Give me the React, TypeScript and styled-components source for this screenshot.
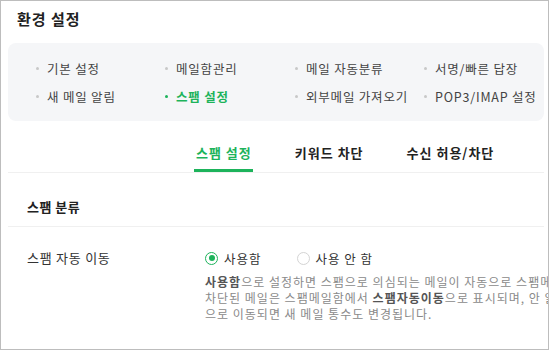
import React, { useState } from 'react'
import styled, { createGlobalStyle } from 'styled-components'

const GlobalStyle = createGlobalStyle`
  html, body {
    margin: 0;
    padding: 0;
    background: #fff;
  }
  body {
    font-family: "Noto Sans CJK KR", "Noto Sans", sans-serif;
    color: #333;
  }
`

const Frame = styled.div`
  width: 547px;
  height: 348px;
  border: 1px solid #bdbdbd;
  overflow: hidden;
  background: #fff;
`

const Page = styled.div`
  width: 536px;
  margin-left: 7px;
`

const Title = styled.h1`
  margin: 0;
  padding: 8px 0 0 9px;
  font-size: 15px;
  line-height: 20px;
  font-weight: 700;
  letter-spacing: 1px;
  color: #222;
`

const MenuPanel = styled.ul`
  list-style: none;
  margin: 14px 0 0;
  padding: 11px 0 11px 28px;
  display: grid;
  grid-template-columns: 129px 130px 129px 129px;
  grid-auto-rows: 28px;
  background: #f5f6f8;
  border-radius: 8px;
`

const MenuItem = styled.li<{ active?: boolean }>`
  display: flex;
  align-items: center;
  white-space: nowrap;
  font-size: 12.5px;
  letter-spacing: 0.8px;
  color: ${({ active }) => (active ? '#1db35b' : '#444')};
  font-weight: ${({ active }) => (active ? 700 : 400)};

  &::before {
    content: '';
    width: 3px;
    height: 3px;
    border-radius: 50%;
    margin-right: 8px;
    background: ${({ active }) => (active ? '#1db35b' : '#c8c8c8')};
  }
`

const TabBar = styled.div`
  display: flex;
  margin-top: 14px;
  height: 37px;
  padding-left: 186px;
  gap: 40px;
  border-bottom: 1px solid #f0f0f0;
`

const Tab = styled.div<{ active?: boolean }>`
  height: 34px;
  padding: 0 1px 0 2px;
  display: flex;
  align-items: center;
  font-size: 13px;
  font-weight: 700;
  letter-spacing: 1px;
  white-space: nowrap;
  color: ${({ active }) => (active ? '#1db35b' : '#222')};
  border-bottom: 3px solid ${({ active }) => (active ? '#1db35b' : 'transparent')};
  margin-bottom: -1px;
`

const SectionTitle = styled.h2`
  margin: 0;
  padding: 24px 0 9px 19px;
  font-size: 13px;
  line-height: 20px;
  font-weight: 700;
  letter-spacing: 0.5px;
  color: #222;
  border-bottom: 1px solid #f0f0f0;
`

const Row = styled.div`
  display: flex;
  padding: 21px 0 0 19px;
`

const Label = styled.div`
  width: 178px;
  flex-shrink: 0;
  font-size: 13px;
  line-height: 20px;
  letter-spacing: 0.75px;
  color: #333;
`

const Field = styled.div`
  display: flex;
  flex-direction: column;
`

const RadioGroup = styled.div`
  display: flex;
  gap: 35px;
  height: 20px;
  align-items: center;
`

const RadioLabel = styled.label`
  display: flex;
  align-items: center;
  gap: 6px;
  font-size: 12.5px;
  letter-spacing: 1px;
  color: #333;
  cursor: pointer;
  white-space: nowrap;
`

const RadioCircle = styled.span<{ checked?: boolean }>`
  width: 11px;
  height: 11px;
  border-radius: 50%;
  border: 1px solid ${({ checked }) => (checked ? '#1db35b' : '#d4d4d4')};
  display: flex;
  align-items: center;
  justify-content: center;

  &::after {
    content: '';
    width: 6px;
    height: 6px;
    border-radius: 50%;
    background: ${({ checked }) => (checked ? '#1db35b' : 'transparent')};
  }
`

const Desc = styled.p`
  margin: 6px 0 0;
  font-size: 12px;
  line-height: 16px;
  letter-spacing: 1px;
  color: #8a8a8a;
  white-space: nowrap;

  b {
    color: #555;
    font-weight: 700;
  }
`

const menus = [
  '기본 설정',
  '메일함관리',
  '메일 자동분류',
  '서명/빠른 답장',
  '새 메일 알림',
  '스팸 설정',
  '외부메일 가져오기',
  'POP3/IMAP 설정',
]

const tabs = ['스팸 설정', '키워드 차단', '수신 허용/차단']

export default function App() {
  const [use, setUse] = useState(true)

  return (
    <>
      <GlobalStyle />
      <Frame>
        <Page>
          <Title>환경 설정</Title>
          <MenuPanel>
            {menus.map((m) => (
              <MenuItem key={m} active={m === '스팸 설정'}>{m}</MenuItem>
            ))}
          </MenuPanel>
          <TabBar>
            {tabs.map((t, i) => (
              <Tab key={t} active={i === 0}>{t}</Tab>
            ))}
          </TabBar>
          <SectionTitle>스팸 분류</SectionTitle>
          <Row>
            <Label>스팸 자동 이동</Label>
            <Field>
              <RadioGroup>
                <RadioLabel onClick={() => setUse(true)}>
                  <RadioCircle checked={use} />
                  사용함
                </RadioLabel>
                <RadioLabel onClick={() => setUse(false)}>
                  <RadioCircle checked={!use} />
                  사용 안 함
                </RadioLabel>
              </RadioGroup>
              <Desc>
                <b>사용함</b>으로 설정하면 스팸으로 의심되는 메일이 자동으로 스팸메일함으로 이동되며,<br />
                차단된 메일은 스팸메일함에서 <b>스팸자동이동</b>으로 표시되며, 안 읽은 메일이 스팸메일함<br />
                으로 이동되면 새 메일 통수도 변경됩니다.
              </Desc>
            </Field>
          </Row>
        </Page>
      </Frame>
    </>
  )
}
